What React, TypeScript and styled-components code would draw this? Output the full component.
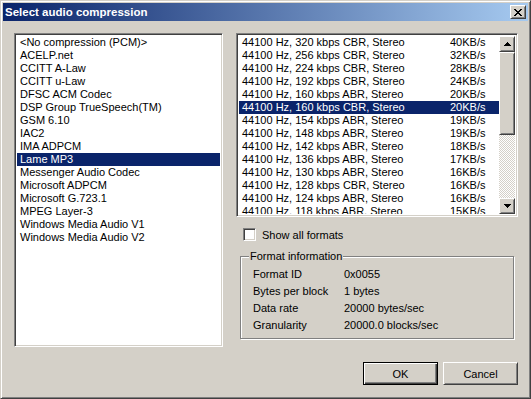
import React from 'react';
import styled, { createGlobalStyle } from 'styled-components';

const FACE = '#d4d0c8';
const SHADOW = '#808080';
const DARK = '#404040';
const SELECT = '#0a246a';

const GlobalStyle = createGlobalStyle`
  html, body {
    margin: 0;
    padding: 0;
    background: ${FACE};
  }
  body {
    font-family: 'Liberation Sans', Arial, sans-serif;
    font-size: 11px;
  }
`;

const Window = styled.div`
  box-sizing: border-box;
  width: 531px;
  height: 399px;
  background: ${FACE};
  border: 1px solid;
  border-color: ${FACE} ${DARK} ${DARK} ${FACE};
  box-shadow: inset 1px 1px 0 #fff, inset -1px -1px 0 ${SHADOW};
  padding: 2px;
  display: flex;
  flex-direction: column;
`;

const TitleBar = styled.div`
  height: 18px;
  flex: none;
  display: flex;
  align-items: center;
  justify-content: space-between;
  padding: 0 2px;
  background: linear-gradient(to right, #0a246a, #a6caf0);
`;

const Title = styled.span`
  color: #fff;
  font-weight: bold;
  font-size: 11.5px;
  letter-spacing: 0;
`;

const raised = `
  background: ${FACE};
  border: 1px solid;
  border-color: #fff ${DARK} ${DARK} #fff;
  box-shadow: inset 1px 1px 0 ${FACE}, inset -1px -1px 0 ${SHADOW};
  box-sizing: border-box;
`;

const sunken = `
  border: 1px solid;
  border-color: ${SHADOW} #fff #fff ${SHADOW};
  box-shadow: inset 1px 1px 0 ${DARK}, inset -1px -1px 0 ${FACE};
  box-sizing: border-box;
`;

const CloseButton = styled.div`
  ${raised}
  width: 16px;
  height: 14px;
  display: flex;
  align-items: center;
  justify-content: center;
`;

const Body = styled.div`
  flex: 1;
  display: flex;
  flex-direction: column;
  padding: 12px 10px 0 11px;
`;

const MainRow = styled.div`
  display: flex;
  gap: 13px;
`;

const ListBox = styled.div<{ $w: number; $h: number }>`
  ${sunken}
  width: ${(p) => p.$w}px;
  height: ${(p) => p.$h}px;
  background: #fff;
  padding: 2px;
  overflow: hidden;
  display: flex;
`;

const Items = styled.div`
  flex: 1;
  min-width: 0;
  overflow: hidden;
`;

const Item = styled.div<{ $selected?: boolean }>`
  height: 13px;
  line-height: 13px;
  padding-left: 3px;
  white-space: nowrap;
  color: ${(p) => (p.$selected ? '#fff' : '#000')};
  background: ${(p) => (p.$selected ? SELECT : 'transparent')};
`;

const FormatItem = styled(Item)`
  display: grid;
  grid-template-columns: 208px 1fr;
`;

const ScrollBar = styled.div`
  width: 16px;
  flex: none;
  display: flex;
  flex-direction: column;
`;

const ScrollButton = styled.div`
  ${raised}
  width: 16px;
  height: 16px;
  flex: none;
  display: flex;
  align-items: center;
  justify-content: center;
`;

const Thumb = styled.div`
  ${raised}
  height: 83px;
  flex: none;
`;

const Track = styled.div`
  flex: 1;
  background-image: conic-gradient(#fff 25%, ${FACE} 0 50%, #fff 0 75%, ${FACE} 0);
  background-size: 2px 2px;
`;

const RightColumn = styled.div`
  display: flex;
  flex-direction: column;
`;

const CheckRow = styled.label`
  display: flex;
  align-items: center;
  gap: 6px;
  margin: 11px 0 0 7px;
  height: 13px;
`;

const CheckBox = styled.span`
  ${sunken}
  width: 13px;
  height: 13px;
  background: #fff;
  display: inline-block;
`;

const GroupBox = styled.div`
  position: relative;
  box-sizing: border-box;
  width: 274px;
  height: 83px;
  margin: 15px 0 0 4px;
  border: 1px solid ${SHADOW};
  box-shadow: inset 1px 1px 0 #fff, 1px 1px 0 #fff;
  padding: 9px 0 0 12px;
`;

const GroupTitle = styled.span`
  position: absolute;
  top: -7px;
  left: 8px;
  padding: 0 1px 0 1px;
  line-height: 13px;
  background: ${FACE};
`;

const InfoRow = styled.div`
  display: grid;
  grid-template-columns: 91px 1fr;
  height: 17px;
  line-height: 17px;
  white-space: nowrap;
`;

const ButtonRow = styled.div`
  display: flex;
  justify-content: flex-end;
  gap: 5px;
  margin-top: 15px;
`;

const Button = styled.button<{ $default?: boolean }>`
  width: 75px;
  height: 23px;
  padding: 0;
  font-family: 'Liberation Sans', Arial, sans-serif;
  font-size: 11px;
  color: #000;
  background: ${FACE};
  box-sizing: border-box;
  border: 1px solid;
  border-color: ${(p) => (p.$default ? '#000' : `#fff ${DARK} ${DARK} #fff`)};
  box-shadow: ${(p) =>
    p.$default
      ? `inset 1px 1px 0 #fff, inset -1px -1px 0 ${DARK}, inset -2px -2px 0 ${SHADOW}`
      : `inset 1px 1px 0 ${FACE}, inset -1px -1px 0 ${SHADOW}`};
`;

const Arrow: React.FC<{ down?: boolean }> = ({ down }) => (
  <svg width="7" height="4" viewBox="0 0 7 4" shapeRendering="crispEdges">
    {down ? <path d="M0 0h7v1H0zM1 1h5v1H1zM2 2h3v1H2zM3 3h1v1H3z" /> : <path d="M3 0h1v1H3zM2 1h3v1H2zM1 2h5v1H1zM0 3h7v1H0z" />}
  </svg>
);

const codecs = [
  '<No compression (PCM)>',
  'ACELP.net',
  'CCITT A-Law',
  'CCITT u-Law',
  'DFSC ACM Codec',
  'DSP Group TrueSpeech(TM)',
  'GSM 6.10',
  'IAC2',
  'IMA ADPCM',
  'Lame MP3',
  'Messenger Audio Codec',
  'Microsoft ADPCM',
  'Microsoft G.723.1',
  'MPEG Layer-3',
  'Windows Media Audio V1',
  'Windows Media Audio V2',
];

const formats: [number, string, number][] = [
  [320, 'CBR', 40],
  [256, 'CBR', 32],
  [224, 'CBR', 28],
  [192, 'CBR', 24],
  [160, 'ABR', 20],
  [160, 'CBR', 20],
  [154, 'ABR', 19],
  [148, 'ABR', 19],
  [142, 'ABR', 18],
  [136, 'ABR', 17],
  [130, 'ABR', 16],
  [128, 'CBR', 16],
  [124, 'ABR', 16],
  [118, 'ABR', 15],
];

const info = [
  ['Format ID', '0x0055'],
  ['Bytes per block', '1 bytes'],
  ['Data rate', '20000 bytes/sec'],
  ['Granularity', '20000.0 blocks/sec'],
];

const App: React.FC = () => (
  <>
    <GlobalStyle />
    <Window>
      <TitleBar>
        <Title>Select audio compression</Title>
        <CloseButton>
          <svg width="8" height="7" viewBox="0 0 8 7" shapeRendering="crispEdges">
            <path d="M0 0h2v1H0zM6 0h2v1H6zM1 1h2v1H1zM5 1h2v1H5zM2 2h4v1H2zM3 3h2v1H3zM2 4h4v1H2zM1 5h2v1H1zM5 5h2v1H5zM0 6h2v1H0zM6 6h2v1H6z" />
          </svg>
        </CloseButton>
      </TitleBar>
      <Body>
        <MainRow>
          <ListBox $w={212} $h={314}>
            <Items>
              {codecs.map((c) => (
                <Item key={c} $selected={c === 'Lame MP3'}>
                  {c}
                </Item>
              ))}
            </Items>
          </ListBox>
          <RightColumn>
            <ListBox $w={282} $h={184}>
              <Items>
                {formats.map(([rate, mode, kb], i) => (
                  <FormatItem key={i} $selected={i === 5}>
                    <span>{`44100 Hz, ${rate} kbps ${mode}, Stereo`}</span>
                    <span>{`${kb}KB/s`}</span>
                  </FormatItem>
                ))}
              </Items>
              <ScrollBar>
                <ScrollButton>
                  <Arrow />
                </ScrollButton>
                <Thumb />
                <Track />
                <ScrollButton>
                  <Arrow down />
                </ScrollButton>
              </ScrollBar>
            </ListBox>
            <CheckRow>
              <CheckBox />
              Show all formats
            </CheckRow>
            <GroupBox>
              <GroupTitle>Format information</GroupTitle>
              {info.map(([k, v]) => (
                <InfoRow key={k}>
                  <span>{k}</span>
                  <span>{v}</span>
                </InfoRow>
              ))}
            </GroupBox>
          </RightColumn>
        </MainRow>
        <ButtonRow>
          <Button $default>OK</Button>
          <Button>Cancel</Button>
        </ButtonRow>
      </Body>
    </Window>
  </>
);

export default App;
